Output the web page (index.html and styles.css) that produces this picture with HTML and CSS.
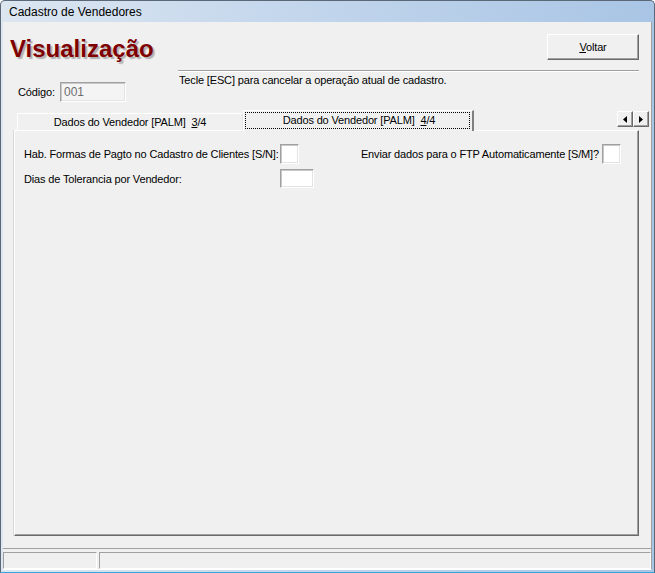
FILE: index.html
```html
<!DOCTYPE html>
<html lang="pt-BR">
<head>
    <meta charset="UTF-8">
    <title>Cadastro de Vendedores</title>
    <link rel="stylesheet" href="styles.css">
</head>
<body>
    <div class="window">
        <div class="titlebar">Cadastro de Vendedores</div>
        <div class="client">
            <div class="header">
                <h1 class="mode">Visualização</h1>
                <button class="btn"><u>V</u>oltar</button>
            </div>
            <div class="info">
                <div class="codigo">
                    <span class="label">Código:</span>
                    <span class="edit edit-disabled">001</span>
                </div>
                <div class="tip">Tecle [ESC] para cancelar a operação atual de cadastro.</div>
            </div>
            <div class="tabs">
                <div class="tab">Dados do Vendedor [PALM]&nbsp;&nbsp;<u>3</u>/4</div>
                <div class="tab tab-active"><span class="focus">Dados do Vendedor [PALM]&nbsp;&nbsp;<u>4</u>/4</span></div>
                <div class="scroller">
                    <span class="arrow"><svg width="4" height="7" viewBox="0 0 4 7"><path d="M4 0 L0 3.5 L4 7 Z" fill="#000"/></svg></span>
                    <span class="arrow"><svg width="4" height="7" viewBox="0 0 4 7"><path d="M0 0 L4 3.5 L0 7 Z" fill="#000"/></svg></span>
                </div>
            </div>
            <div class="page">
                <div class="row">
                    <span class="label label-wide">Hab. Formas de Pagto no Cadastro de Clientes [S/N]:</span>
                    <span class="edit edit-small"></span>
                    <span class="right-group">
                        <span class="label">Enviar dados para o FTP Automaticamente [S/M]?</span>
                        <span class="edit edit-small"></span>
                    </span>
                </div>
                <div class="row row-second">
                    <span class="label label-wide">Dias de Tolerancia por Vendedor:</span>
                    <span class="edit edit-medium"></span>
                </div>
            </div>
            <div class="statusbar">
                <div class="panel panel-first"></div>
                <div class="panel panel-rest"></div>
            </div>
        </div>
    </div>
</body>
</html>
```

FILE: styles.css
```css
body {
    margin: 0;
    background: #ffffff;
    font-family: "Liberation Sans", Arial, sans-serif;
    overflow: hidden;
}
.window {
    width: 655px;
    height: 573px;
    box-sizing: border-box;
    display: flex;
    flex-direction: column;
    background: linear-gradient(90deg, #dce6f1 0%, #c3d6ec 45%, #a9c5e5 100%);
    border: 1px solid #5a6878;
    border-bottom-color: #3aa6d8;
    border-radius: 5px 5px 0 0;
    padding: 0 2px 2px 2px;
}
.titlebar {
    height: 21px;
    line-height: 22px;
    padding-left: 6px;
    font-size: 12px;
    color: #000;
}
.client {
    flex: 1;
    display: flex;
    flex-direction: column;
    background: #f0f0f0;
    border-bottom: 1px solid #ffffff;
    border-right: 1px solid #a0a0a0;
    font-size: 11px;
    letter-spacing: -0.15px;
    color: #000;
}
.header {
    display: flex;
    justify-content: space-between;
    align-items: flex-start;
    padding: 12px 12px 0 7px;
    height: 26px;
}
.mode {
    margin: 1px 0 0 0;
    font-size: 24px;
    line-height: 28px;
    font-weight: bold;
    letter-spacing: 0;
    color: #800000;
    text-shadow: 2px 2px 1px #b0b0b0;
}
.btn {
    width: 92px;
    height: 26px;
    padding: 0;
    background: #f0f0f0;
    border: 1px solid;
    border-color: #ffffff #696969 #696969 #ffffff;
    box-shadow: inset -1px -1px 0 #a0a0a0;
    font-family: inherit;
    font-size: 11px;
    letter-spacing: -0.15px;
    color: #000;
}
.info {
    display: flex;
    height: 42px;
    padding-left: 15px;
}
.codigo {
    width: 160px;
    padding-top: 22px;
    display: flex;
    align-items: center;
    align-self: flex-start;
}
.codigo .label {
    width: 42px;
}
.tip {
    flex: 1;
    margin: 10px 12px 0 0;
    padding: 3px 0 0 1px;
    border-top: 1px solid #a0a0a0;
    box-shadow: inset 0 1px 0 #ffffff;
    line-height: 13px;
}
.edit {
    display: block;
    box-sizing: border-box;
    height: 20px;
    background: #ffffff;
    border: 1px solid;
    border-color: #a0a0a0 #ffffff #ffffff #a0a0a0;
    box-shadow: inset 1px 1px 0 #c8c8c8, inset -1px -1px 0 #e3e3e3;
}
.edit-disabled {
    width: 66px;
    background: #f4f4f4;
    color: #6d6d6d;
    font-size: 12px;
    line-height: 18px;
    padding-left: 3px;
    letter-spacing: 0;
}
.edit-small {
    width: 19px;
}
.edit-medium {
    width: 34px;
    height: 19px;
}
.tabs {
    display: flex;
    align-items: flex-end;
    height: 20px;
    margin-top: 8px;
    padding-left: 14px;
}
.tab {
    box-sizing: border-box;
    width: 226px;
    height: 17px;
    line-height: 16px;
    text-align: center;
    border: 1px solid #ffffff;
    border-bottom: none;
    border-right-color: #e3e3e3;
}
.tab-active {
    position: relative;
    z-index: 1;
    width: 231px;
    height: 21px;
    margin-bottom: -1px;
    background: #f0f0f0;
    padding: 1px 2px 3px 1px;
    border-right: 2px solid #808080;
}
.focus {
    display: block;
    height: 15px;
    line-height: 14px;
    border: 1px dotted #000;
    padding-left: 3px;
}
.scroller {
    display: flex;
    align-self: flex-start;
    margin: 1px 2px 0 auto;
}
.arrow {
    box-sizing: border-box;
    width: 16px;
    height: 16px;
    display: flex;
    align-items: center;
    justify-content: center;
    background: #f0f0f0;
    border: 1px solid;
    border-color: #ffffff #696969 #696969 #ffffff;
    box-shadow: inset -1px -1px 0 #a0a0a0;
}
.page {
    flex: 1;
    margin: 0 12px 0 11px;
    border: 1px solid;
    border-color: #ffffff #696969 #696969 #ffffff;
    box-shadow: inset -1px -1px 0 #a0a0a0, -1px 0 0 #d8d8d8;
    padding: 13px 17px 0 9px;
}
.row {
    display: flex;
    align-items: center;
}
.row-second {
    margin-top: 5px;
}
.label-wide {
    width: 256px;
}
.right-group {
    display: flex;
    align-items: center;
    gap: 3px;
    margin-left: auto;
}
.statusbar {
    display: flex;
    gap: 2px;
    margin-top: 12px;
    padding-top: 3px;
    border-top: 1px solid #a0a0a0;
}
.panel {
    box-sizing: border-box;
    height: 17px;
    border: 1px solid;
    border-color: #a0a0a0 #ffffff #ffffff #a0a0a0;
}
.panel-first {
    width: 94px;
}
.panel-rest {
    flex: 1;
}
```
